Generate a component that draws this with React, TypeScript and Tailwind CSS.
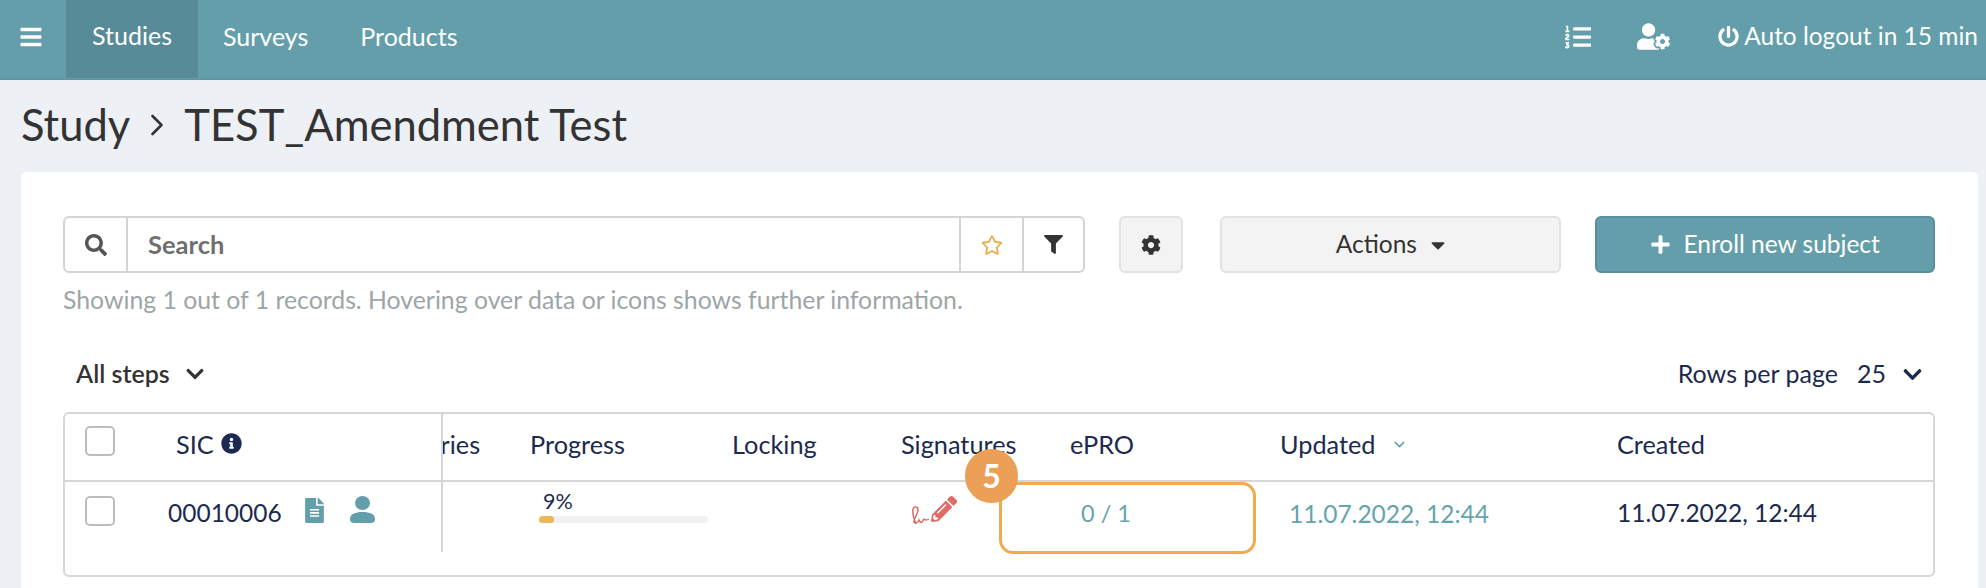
import { FaBars, FaSearch, FaRegStar, FaFilter, FaCog, FaCaretDown, FaPlus, FaChevronDown, FaInfoCircle, FaFileAlt, FaListOl, FaUserCog, FaPencilAlt, FaPowerOff } from 'react-icons/fa';
import { FiChevronDown, FiChevronRight } from 'react-icons/fi';

const font = { fontFamily: 'Lato, "Open Sans", sans-serif' };

function PersonIcon() {
  return (
    <svg viewBox="0 0 25 27" className="w-[25px] h-[27px] fill-[#639fab]">
      <ellipse cx="12.5" cy="7" rx="7.5" ry="7" />
      <path d="M0 23c0-5 5-7 12.5-7S25 18 25 23c0 3-2 4-4 4H4c-2 0-4-1-4-4z" />
    </svg>
  );
}

function SignatureIcon() {
  return (
    <div className="flex items-end">
      <svg viewBox="0 0 20 20" className="w-[20px] h-[20px] fill-none stroke-[#e06b66] stroke-[1.5]">
        <path d="M5 19C3 14 1 8 2 4c1-3 5-3 5 1 0 5-5 9-4 12 1 2 4 1 5-2 1 2 2 3 3 2 1-1 1-2 2-3 1 1 2 2 5 0" />
      </svg>
      <FaPencilAlt className="text-[#e06b66] text-[26px] mb-[3px]" />
    </div>
  );
}

export default function App() {
  return (
    <div className="h-[588px] w-[1986px] overflow-hidden bg-[#edf0f5] flex flex-col" style={font}>
      <nav className="h-20 shrink-0 bg-[#639eaa] border-b border-[#5c95a1] flex items-start text-white text-[25px]">
        <div className="w-[66px] h-[73px] flex items-center pl-[19px]">
          <FaBars className="text-[24px]" />
        </div>
        <div className="w-[132px] h-[78px] pb-[6px] bg-[#578b97] flex items-center justify-center">Studies</div>
        <div className="h-[73px] flex items-center ml-[25px]">Surveys</div>
        <div className="h-[73px] flex items-center ml-[52px]">Products</div>
        <div className="ml-auto h-[73px] flex items-center pr-[8px]">
          <FaListOl className="text-[26px]" />
          <FaUserCog className="text-[33px] ml-[46px]" />
          <FaPowerOff className="text-[21px] ml-[48px]" />
          <span className="ml-[5px] whitespace-nowrap text-[24.5px]">Auto logout in 15 min</span>
        </div>
      </nav>

      <div className="h-[92px] shrink-0 flex items-center pb-[3px] pl-[21px] text-[43.5px] text-[#333] whitespace-nowrap">
        Study<FiChevronRight className="mx-[9px] text-[36px] stroke-[1.75]" />TEST_Amendment Test
      </div>

      <main className="flex-1 ml-[21px] mr-[8px] bg-white rounded-t-[6px] pl-[42px] pr-[43px] pt-[44px]">
        <div className="flex h-[57px] text-[24.5px]">
          <div className="w-[1023px] flex border-2 border-[#d4d4d4] rounded-[6px]">
            <div className="w-[63px] flex items-center justify-center border-r-2 border-[#d4d4d4] text-[#555]">
              <FaSearch className="text-[22px]" />
            </div>
            <div className="flex-1 flex items-center pl-[20px] font-bold text-[#6f6f6f] text-[25.5px]">Search</div>
            <div className="w-[63px] flex items-center justify-center border-l-2 border-[#d4d4d4] text-[#ebb04e]">
              <FaRegStar className="text-[22px]" />
            </div>
            <div className="w-[61px] flex items-center justify-center border-l-2 border-[#d4d4d4] text-[#333]">
              <FaFilter className="text-[19px]" />
            </div>
          </div>
          <div className="w-[64px] ml-[34px] flex items-center justify-center bg-[#f3f3f3] border-2 border-[#e2e2e2] rounded-[6px] text-[#333]">
            <FaCog className="text-[20px]" />
          </div>
          <div className="w-[341px] ml-[37px] pl-[3px] flex items-center justify-center gap-[10px] bg-[#f3f3f3] border-2 border-[#e2e2e2] rounded-[6px] text-[#333]">
            Actions <FaCaretDown className="text-[22px]" />
          </div>
          <div className="w-[340px] ml-[34px] flex items-center justify-center gap-[12px] bg-[#639eaa] border-2 border-[#55909c] rounded-[6px] text-white">
            <FaPlus className="text-[21px]" /> Enroll new subject
          </div>
        </div>

        <p className="mt-[14px] h-[26px] leading-[26px] text-[24.8px] text-[#9ca6a6] whitespace-nowrap">
          Showing 1 out of 1 records. Hovering over data or icons shows further information.
        </p>

        <div className="mt-[41px] h-[40px] flex items-center justify-between text-[25px] pl-[13px]">
          <div className="flex items-center gap-[15px] font-semibold text-[#333]">
            All steps <FaChevronDown className="text-[20px]" />
          </div>
          <div className="flex items-center text-[#1b2a4e] pr-[12px]">
            Rows per page<span className="ml-[19px]">25</span>
            <FaChevronDown className="text-[21px] ml-[16px]" />
          </div>
        </div>

        <div className="relative mt-[18px] h-[165px] border-2 border-[#d6d6d6] rounded-[6px] text-[24.5px] text-[#1b2a4e]">
          <div className="grid grid-cols-[378px_87px_202px_169px_169px_210px_337px_1fr] h-[68px] border-b-2 border-[#d6d6d6] items-start text-[25.3px] leading-[38px]">
            <div className="self-stretch flex items-start pt-[12px] border-r-2 border-[#d6d6d6]">
              <div className="ml-[20px] w-[30px] h-[30px] border-2 border-[#bdbdbd] rounded-[5px]" />
              <span className="ml-[61px] mt-[-1px]">SIC</span>
              <FaInfoCircle className="ml-[7px] mt-[7px] text-[21px]" />
            </div>
            <div className="overflow-hidden flex justify-start pt-[11px]">
              <span className="ml-[-50px]">Queries</span>
            </div>
            <div className="pt-[11px]">Progress</div>
            <div className="pt-[11px]">Locking</div>
            <div className="pt-[11px]">Signatures</div>
            <div className="pt-[11px]">ePRO</div>
            <div className="pt-[11px] flex items-center gap-[15px]">
              Updated <FiChevronDown className="text-[17px] text-[#639fab]" />
            </div>
            <div className="pt-[11px]">Created</div>
          </div>
          <div className="grid grid-cols-[378px_87px_202px_169px_169px_210px_337px_1fr] items-start">
            <div className="h-[70px] border-r-2 border-[#d6d6d6] flex items-start pt-[14px]">
              <div className="ml-[20px] w-[30px] h-[30px] border-2 border-[#bdbdbd] rounded-[5px]" />
              <span className="ml-[53px] mt-[-1px]">00010006</span>
              <FaFileAlt className="ml-[20px] mt-[2px] text-[25px] text-[#639fab]" />
              <div className="ml-[23px]"><PersonIcon /></div>
            </div>
            <div />
            <div className="pl-[13px] pt-[6px]">
              <div className="text-[21.5px] leading-[26px]">9%</div>
              <div className="ml-[-4px] mt-[2px] w-[169px] h-[7px] rounded-full bg-[#f1f1f1]">
                <div className="h-full rounded-full bg-[#ebb655]" style={{ width: '9%' }} />
              </div>
            </div>
            <div />
            <div className="pl-[10px] pt-[14px]"><SignatureIcon /></div>
            <div className="pl-[11px] pt-[14px] text-[#66a4ac] text-[23.5px]">0 / 1</div>
            <div className="pl-[9px] pt-[14px] text-[#66a4ac]">11.07.2022, 12:44</div>
            <div className="pt-[13px]">11.07.2022, 12:44</div>
          </div>

          <div className="absolute left-[934px] top-[68px] w-[257px] h-[72px] border-[3px] border-[#f0ab4e] rounded-[14px]" />
          <div className="absolute left-[900px] top-[35px] w-[53px] h-[54px] rounded-full bg-[#ec9f56] flex items-center justify-center text-white text-[32px] font-bold">
            5
          </div>
        </div>
      </main>
    </div>
  );
}
